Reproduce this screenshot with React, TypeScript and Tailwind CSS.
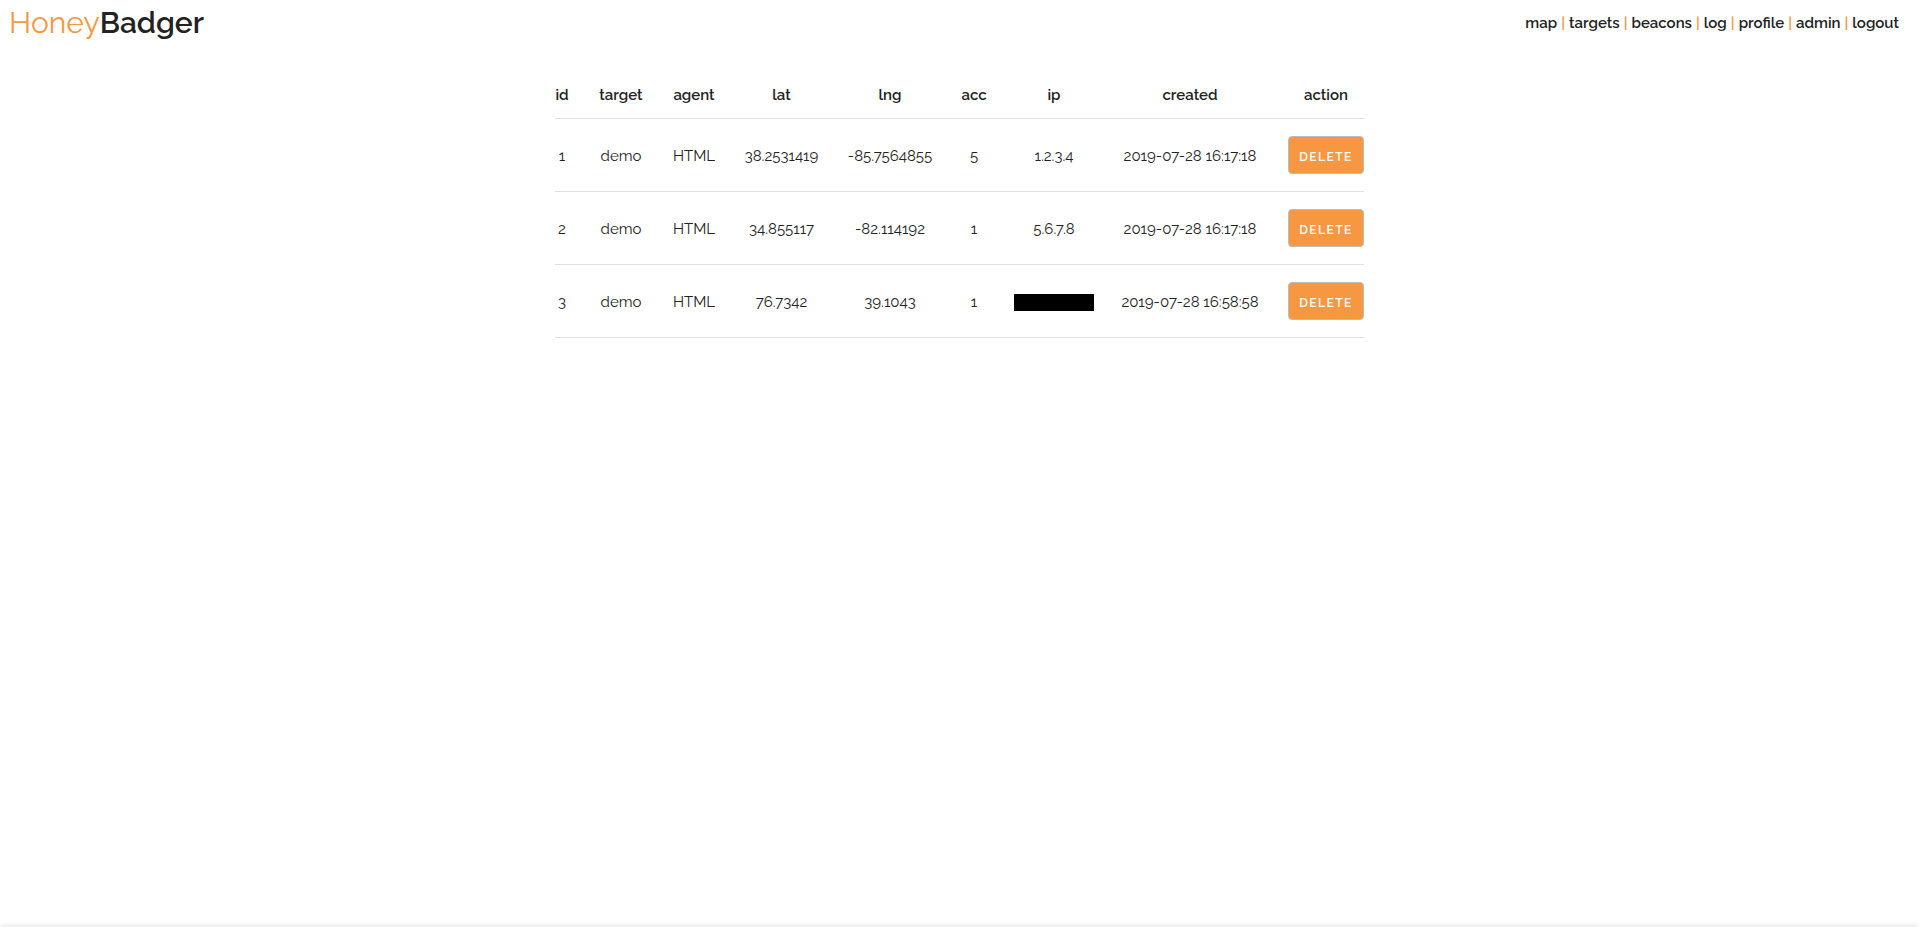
import { Fragment } from "react";

const links = ["map", "targets", "beacons", "log", "profile", "admin", "logout"];

const columns = [
  { name: "id", cls: "w-[29px] pr-[15px]" },
  { name: "target", cls: "w-[74px]" },
  { name: "agent", cls: "w-[72px]" },
  { name: "lat", cls: "w-[103px]" },
  { name: "lng", cls: "w-[114px]" },
  { name: "acc", cls: "w-[54px]" },
  { name: "ip", cls: "w-[106px]" },
  { name: "created", cls: "w-[166px]" },
  { name: "action", cls: "w-[91px] pl-[15px]" },
];

const beacons = [
  ["1", "demo", "HTML", "38.2531419", "-85.7564855", "5", "1.2.3.4", "2019-07-28 16:17:18"],
  ["2", "demo", "HTML", "34.855117", "-82.114192", "1", "5.6.7.8", "2019-07-28 16:17:18"],
  ["3", "demo", "HTML", "76.7342", "39.1043", "1", "", "2019-07-28 16:58:58"],
];

export default function App() {
  return (
    <div className="flex h-[927px] flex-col overflow-hidden bg-white font-['Raleway',sans-serif] text-[15px] leading-6 text-[#222]">
      <header className="flex h-[46px] items-center justify-between pl-[9px] pr-5">
        <h1 className="text-[30px] leading-[46px]">
          <span className="font-normal text-[#f79742]">Honey</span>
          <span className="font-semibold">Badger</span>
        </h1>
        <nav className="font-semibold whitespace-nowrap">
          {links.map((link, i) => (
            <Fragment key={link}>
              {i > 0 && <span className="px-[0.3px] text-[#f79742]"> | </span>}
              <a href="#">{link}</a>
            </Fragment>
          ))}
        </nav>
      </header>

      <main className="flex flex-1 justify-center pt-[24px]">
        <table className="h-[268px] w-[809px] table-fixed self-start border-separate border-spacing-0 text-center whitespace-nowrap">
          <thead>
            <tr className="h-[49px]">
              {columns.map((c) => (
                <th key={c.name} className={`border-b border-[#e1e1e1] pt-[2px] font-semibold ${c.cls}`}>
                  {c.name}
                </th>
              ))}
            </tr>
          </thead>
          <tbody>
            {beacons.map((row) => (
              <tr key={row[0]} className="h-[73px]">
                {row.map((value, i) => (
                  <td key={i} className={`border-b border-[#e1e1e1] pt-[2px] ${columns[i].cls}`}>
                    {value || <div className="mx-auto mt-px h-[17px] w-[80px] bg-black" />}
                  </td>
                ))}
                <td className="border-b border-[#e1e1e1] pl-[15px]">
                  <button className="block h-[38px] w-[76px] rounded-[4px] border border-[#bbb] bg-[#f79742] pt-[2px] text-center text-[12px] leading-[34px] font-semibold tracking-[1.5px] text-white">
                    <span className="block pt-px">DELETE</span>
                  </button>
                </td>
              </tr>
            ))}
          </tbody>
        </table>
      </main>

      <footer className="mx-[2px] mt-auto h-0 shadow-[0_0_5px_1px_rgba(0,0,0,0.2)]" />
    </div>
  );
}
